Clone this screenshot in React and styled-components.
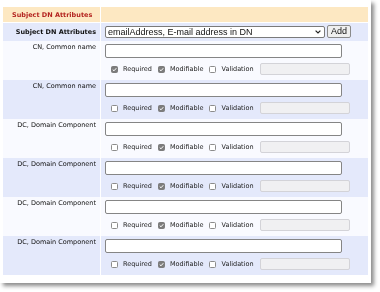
import React from 'react';
import styled, { createGlobalStyle } from 'styled-components';

const GlobalStyle = createGlobalStyle`
    html, body {
        margin: 0;
        padding: 0;
        background: #ffffff;
    }
    body {
        font-family: "DejaVu Sans", Verdana, sans-serif;
        -webkit-font-smoothing: antialiased;
    }
`

//Panel
const Page = styled.div`
    width: 380px;
    height: 292px;
    background: #ffffff;
`
const Panel = styled.div`
    width: 365px;
    padding: 7px 3px 8px 3px;
    background: #ffffff;
    box-shadow: 3px 3px 4px rgba(0, 0, 0, 0.45);
    will-change: transform;
`
const Row = styled.div`
    display: grid;
    grid-template-columns: 97px 1fr;
    column-gap: 1px;
    margin-bottom: ${props => props.gap ? '1px' : '0'};
`
const LabelCell = styled.div`
    background: ${props => props.bg};
    color: ${props => props.red ? '#b3231f' : '#111111'};
    font-size: 6.5px;
    font-weight: ${props => props.bold ? 700 : 400};
    text-align: ${props => props.left ? 'left' : 'right'};
    padding: ${props => props.pad || '2px 4px 0 0'};
    display: flex;
    align-items: ${props => props.middle ? 'center' : 'flex-start'};
    justify-content: ${props => props.left ? 'flex-start' : 'flex-end'};
    white-space: nowrap;
`
const FieldCell = styled.div`
    background: ${props => props.bg};
    display: flex;
    flex-direction: column;
    padding: ${props => props.pad || '3px 0 0 4px'};
`

//Controls
const SelectLine = styled.div`
    display: flex;
    flex-direction: row;
    align-items: center;
    column-gap: 2px;
`
const SelectBox = styled.div`
    width: 220px;
    height: 12px;
    box-sizing: border-box;
    border: 1px solid #7a7a7a;
    border-radius: 2px;
    background: #ffffff;
    display: flex;
    align-items: center;
    justify-content: space-between;
    padding: 0 3px 0 2px;
    font-family: "Liberation Sans", Arial, sans-serif;
    font-size: 9px;
    color: #111;
`
const AddButton = styled.button`
    width: 24px;
    height: 13px;
    box-sizing: border-box;
    border: 1px solid #8a8a8a;
    border-radius: 2px;
    background: #efefef;
    padding: 0;
    font-family: "Liberation Sans", Arial, sans-serif;
    font-size: 9px;
    color: #111;
    line-height: 11px;
`
const TextInput = styled.input`
    width: 237px;
    height: 14px;
    box-sizing: border-box;
    margin: 0;
    border: 1px solid #858585;
    border-radius: 2px;
    background: #ffffff;
    padding: 0 2px;
    outline: none;
`
const OptionLine = styled.div`
    display: flex;
    flex-direction: row;
    align-items: center;
    height: 12px;
    margin-top: 5px;
    padding-left: 6px;
`
const Box = styled.span`
    width: 7px;
    height: 7px;
    box-sizing: border-box;
    border-radius: 1.5px;
    border: 1px solid ${props => props.checked ? '#7c7c7c' : '#8c8c8c'};
    background: ${props => props.checked ? '#7c7c7c' : '#ffffff'};
    display: flex;
    align-items: center;
    justify-content: center;
    flex-shrink: 0;
`
const OptionText = styled.span`
    font-size: 6.5px;
    color: #222222;
    margin-left: 5px;
    margin-right: 6px;
    white-space: nowrap;
`
const DisabledInput = styled.input`
    width: 90px;
    height: 12px;
    box-sizing: border-box;
    margin: 0;
    border: 1px solid #d3d3d8;
    border-radius: 2px;
    background: #f0f0f2;
    padding: 0;
    outline: none;
`

const Check = ({ checked }) => (
    <Box checked={checked}>
        {checked && (
            <svg width="5" height="5" viewBox="0 0 10 10">
                <path d="M1.5 5.2 L4 7.6 L8.6 2.4" fill="none" stroke="#ffffff" strokeWidth="2" />
            </svg>
        )}
    </Box>
)

const WHITE = '#f9faff'
const BLUE = '#e4e9fb'
const ORANGE = '#fde8c2'

const fields = [
    { name: 'CN, Common name', required: true },
    { name: 'CN, Common name', required: false },
    { name: 'DC, Domain Component', required: false },
    { name: 'DC, Domain Component', required: false },
    { name: 'DC, Domain Component', required: false },
    { name: 'DC, Domain Component', required: false },
]

export default function App() {
    return (
        <Page>
            <GlobalStyle />
            <Panel>
                <Row gap>
                    <LabelCell bg={ORANGE} red bold left middle pad="0 0 0 9px" style={{ height: '15px' }}>
                        {'Subject DN Attributes'}
                    </LabelCell>
                    <FieldCell bg={ORANGE} />
                </Row>
                <Row>
                    <LabelCell bg={BLUE} bold middle pad="0 4px 0 0">
                        {'Subject DN Attributes'}
                    </LabelCell>
                    <FieldCell bg={BLUE} pad="2px 0 3px 4px">
                        <SelectLine>
                            <SelectBox>
                                <span>{'emailAddress, E-mail address in DN'}</span>
                                <svg width="6" height="4" viewBox="0 0 6 4">
                                    <path d="M0.6 0.6 L3 3 L5.4 0.6" fill="none" stroke="#222" strokeWidth="1.2" />
                                </svg>
                            </SelectBox>
                            <AddButton type="button">{'Add'}</AddButton>
                        </SelectLine>
                    </FieldCell>
                </Row>
                {fields.map((f, i) => {
                    const bg = i % 2 === 0 ? WHITE : BLUE
                    return (
                        <Row key={i}>
                            <LabelCell bg={bg}>{f.name}</LabelCell>
                            <FieldCell bg={bg} pad="3px 0 5px 4px">
                                <TextInput readOnly />
                                <OptionLine>
                                    <Check checked={f.required} />
                                    <OptionText>{'Required'}</OptionText>
                                    <Check checked />
                                    <OptionText>{'Modifiable'}</OptionText>
                                    <Check checked={false} />
                                    <OptionText>{'Validation'}</OptionText>
                                    <DisabledInput disabled />
                                </OptionLine>
                            </FieldCell>
                        </Row>
                    )
                })}
            </Panel>
        </Page>
    );
}
